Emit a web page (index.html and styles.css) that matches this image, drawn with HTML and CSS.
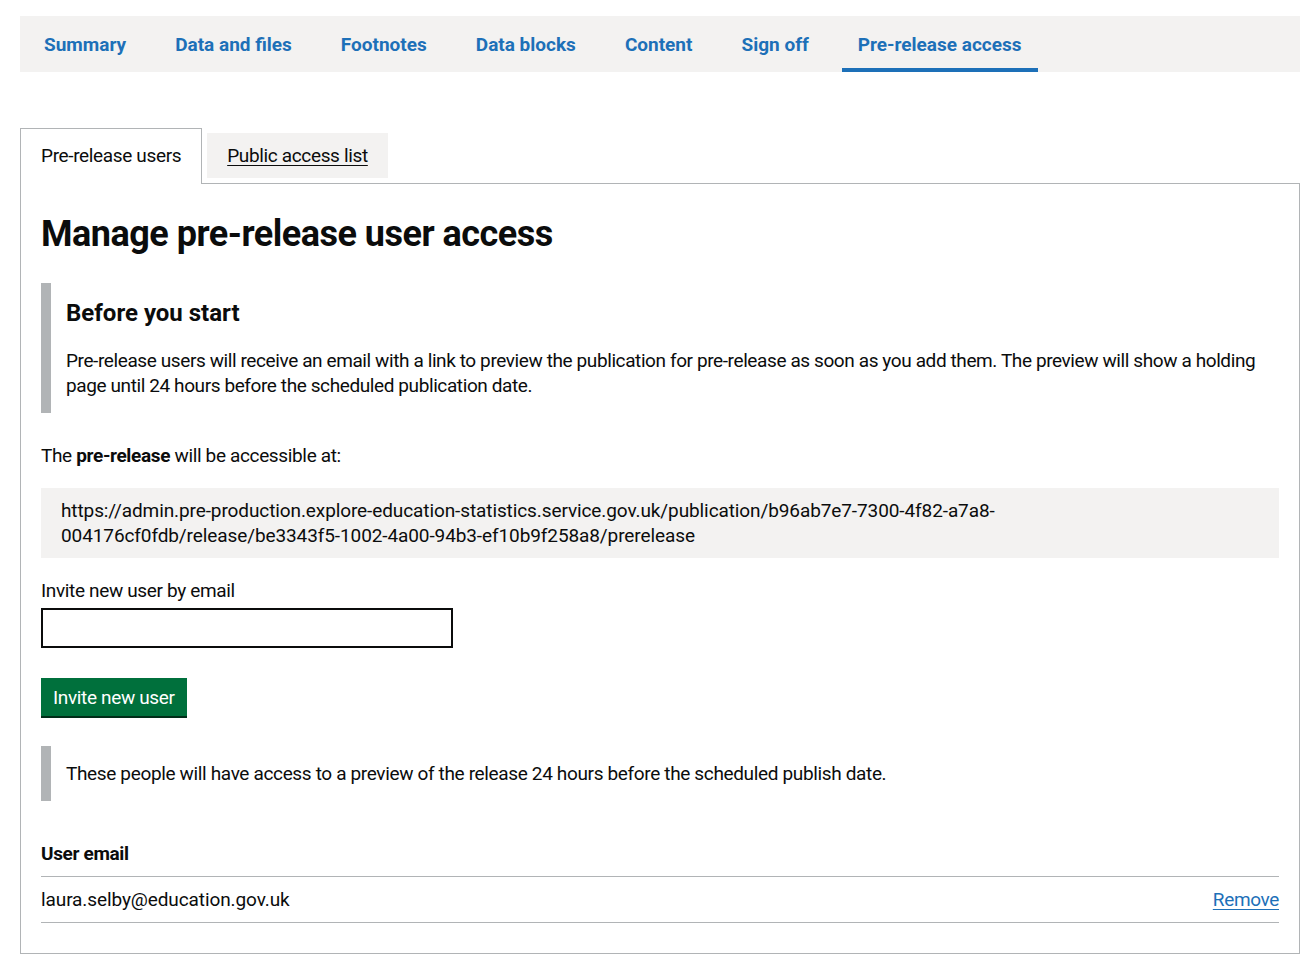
FILE: index.html
```html
<!DOCTYPE html>
<html lang="en">
<head>
<meta charset="utf-8">
<title>Manage pre-release user access</title>
<link rel="stylesheet" href="styles.css">
</head>
<body>
<div class="page">
  <nav class="nav">
    <ul class="nav-list">
      <li><a class="nav-link" href="#">Summary</a></li>
      <li><a class="nav-link" href="#">Data and files</a></li>
      <li><a class="nav-link" href="#">Footnotes</a></li>
      <li><a class="nav-link" href="#">Data blocks</a></li>
      <li><a class="nav-link" href="#">Content</a></li>
      <li><a class="nav-link" href="#">Sign off</a></li>
      <li><a class="nav-link nav-link-active" href="#">Pre-release access</a></li>
    </ul>
  </nav>

  <div class="tabs">
    <ul class="tabs-list">
      <li class="tab tab-selected"><a class="tab-link" href="#">Pre-release users</a></li>
      <li class="tab"><a class="tab-link" href="#">Public access list</a></li>
    </ul>
    <section class="panel">
      <h1 class="heading-l">Manage pre-release user access</h1>

      <div class="inset">
        <h2 class="heading-m">Before you start</h2>
        <p class="body body-tight">Pre-release users will receive an email with a link to preview the publication for pre-release as soon as you add them. The preview will show a holding<br>page until 24 hours before the scheduled publication date.</p>
      </div>

      <p class="body body-gap">The <strong>pre-release</strong> will be accessible at:</p>

      <div class="url-box">https://admin.pre-production.explore-education-statistics.service.gov.uk/publication/b96ab7e7-7300-4f82-a7a8-<br>004176cf0fdb/release/be3343f5-1002-4a00-94b3-ef10b9f258a8/prerelease</div>

      <form class="invite-form">
        <label class="label" for="email">Invite new user by email</label>
        <input class="input" id="email" type="email">
        <div class="button-row">
          <button class="button" type="button">Invite new user</button>
        </div>
      </form>

      <div class="inset inset-single">
        <p class="body">These people will have access to a preview of the release 24 hours before the scheduled publish date.</p>
      </div>

      <table class="table">
        <thead>
          <tr><th class="table-head">User email</th><th class="table-head"></th></tr>
        </thead>
        <tbody>
          <tr>
            <td class="table-cell table-cell-email">laura.selby@education.gov.uk</td>
            <td class="table-cell table-cell-right"><a class="link" href="#">Remove</a></td>
          </tr>
        </tbody>
      </table>
    </section>
  </div>
</div>
</body>
</html>
```
FILE: styles.css
```css
* { box-sizing: border-box; }

html, body {
  margin: 0;
  padding: 0;
  background: #ffffff;
}

body {
  font-family: Roboto, "Liberation Sans", Arial, sans-serif;
  color: #0b0c0c;
  font-size: 19px;
  line-height: 25px;
  letter-spacing: -0.35px;
}

.page {
  width: 1280px;
  margin: 16px 0 0 20px;
}

/* top navigation */
.nav {
  background: #f3f2f1;
  height: 56px;
  padding-left: 8px;
}

.nav-list {
  list-style: none;
  margin: 0;
  padding: 0;
  display: flex;
  gap: 17px;
  height: 100%;
}

.nav-link {
  display: flex;
  align-items: center;
  height: 56px;
  padding: 4px 16px 0;
  border-bottom: 4px solid transparent;
  color: #1d70b8;
  font-weight: 700;
  font-size: 19px;
  letter-spacing: 0;
  text-decoration: none;
}

.nav-link-active {
  border-bottom-color: #1d70b8;
}

/* tabs */
.tabs {
  margin-top: 61px;
}

.tabs-list {
  list-style: none;
  margin: 0;
  padding: 0;
  display: flex;
  align-items: flex-start;
}

.tab {
  background: #f3f2f1;
  padding: 10px 20px;
  margin-right: 5px;
}

.tab-link {
  color: #0b0c0c;
  text-decoration: underline;
  text-decoration-thickness: 1px;
  text-underline-offset: 3px;
}

.tab-selected {
  background: #ffffff;
  border: 1px solid #b1b4b6;
  border-bottom: 0;
  margin-top: -5px;
  margin-bottom: -1px;
  padding: 14px 20px 16px;
  position: relative;
  z-index: 1;
}

.tab-selected .tab-link {
  text-decoration: none;
}

.panel {
  border: 1px solid #b1b4b6;
  padding: 30px 20px 30px;
}

/* typography */
.heading-l {
  margin: 0 0 29px;
  font-size: 36px;
  line-height: 40px;
  font-weight: 700;
  letter-spacing: -0.5px;
}

.heading-m {
  margin: 0 0 20px;
  font-size: 24px;
  line-height: 30px;
  font-weight: 700;
  letter-spacing: 0;
}

.body {
  margin: 0;
  font-size: 19px;
  line-height: 25px;
}

.body-tight {
  letter-spacing: -0.4px;
}

.body-gap {
  margin-bottom: 20px;
}

.inset {
  border-left: 10px solid #b1b4b6;
  padding: 15px;
  margin: 0 0 30px;
}

.inset-single {
  margin-bottom: 30px;
}

.url-box {
  background: #f3f2f1;
  padding: 10px 20px;
  margin-bottom: 20px;
  letter-spacing: -0.1px;
}

/* form */
.invite-form {
  margin: 0;
}

.label {
  display: block;
  margin-bottom: 5px;
}

.input {
  display: block;
  width: 412px;
  height: 40px;
  border: 2px solid #0b0c0c;
  border-radius: 0;
  padding: 5px;
  font: inherit;
  margin: 0 0 30px;
}

.button-row {
  margin-bottom: 30px;
}

.button {
  display: inline-block;
  background: #00703c;
  color: #ffffff;
  font-family: inherit;
  font-size: 19px;
  line-height: 19px;
  letter-spacing: -0.35px;
  padding: 8px 10px 7px;
  border: 2px solid transparent;
  border-radius: 0;
  box-shadow: 0 2px 0 #002d18;
  cursor: pointer;
  margin: 0;
}

/* table */
.table {
  width: 100%;
  border-collapse: collapse;
  border-spacing: 0;
}

.table-head {
  text-align: left;
  font-weight: 700;
  padding: 10px 20px 10px 0;
  border-bottom: 1px solid #b1b4b6;
}

.table-cell {
  padding: 10px 20px 10px 0;
  border-bottom: 1px solid #b1b4b6;
}

.table-cell-email {
  letter-spacing: -0.1px;
}

.table-cell-right {
  text-align: right;
  padding-right: 0;
}

.table-head:last-child {
  padding-right: 0;
}

.link {
  color: #1d70b8;
  text-decoration: underline;
  text-decoration-thickness: 1px;
  text-underline-offset: 3px;
}
```
